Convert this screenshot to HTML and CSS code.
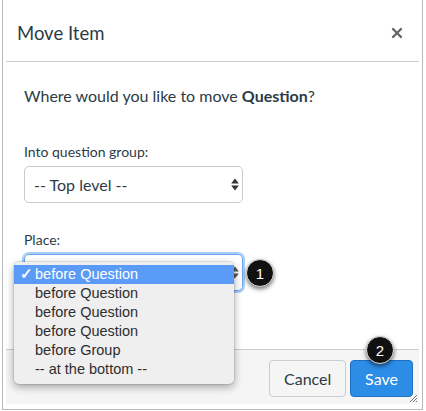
FILE: index.html
```html
<!DOCTYPE html>
<html>
<head>
<meta charset="utf-8">
<link rel="stylesheet" href="styles.css">
</head>
<body>
<div class="frame">
  <div class="dialog">
    <div class="header">
      <span class="title">Move Item</span>
      <svg class="close" width="12" height="12" viewBox="0 0 12 12"><path d="M2 2L10 10M10 2L2 10" stroke="#666" stroke-width="2.4" stroke-linecap="round"/></svg>
    </div>
    <div class="content">
      <p class="question">Where would you like to move <b>Question</b>?</p>
      <div class="label">Into question group:</div>
      <div class="select">
        <span>-- Top level --</span>
        <svg class="arrows" width="8" height="13" viewBox="0 0 8 13"><path d="M4 0.5L7.8 5.5H0.2Z M4 12.5L7.8 7.5H0.2Z" fill="#333"/></svg>
      </div>
      <div class="label label2">Place:</div>
      <div class="select focused">
        <span></span>
        <svg class="arrows" width="8" height="13" viewBox="0 0 8 13"><path d="M4 0.5L7.8 5.5H0.2Z M4 12.5L7.8 7.5H0.2Z" fill="#555"/></svg>
        <div class="badge badge1">1</div>
      </div>
    </div>
    <div class="footer">
      <button class="btn cancel">Cancel</button>
      <button class="btn save">Save<span class="badge badge2">2</span></button>
      <svg class="grip" width="9" height="9" viewBox="0 0 9 9"><path d="M8 1L1 8M8 4L4 8M8 7L7 8" stroke="#777" stroke-width="1"/></svg>
    </div>
  </div>
  <ul class="menu">
    <li class="sel"><span class="check">✓</span>before Question</li>
    <li>before Question</li>
    <li>before Question</li>
    <li>before Question</li>
    <li>before Group</li>
    <li>-- at the bottom --</li>
  </ul>
</div>
</body>
</html>
```
FILE: styles.css
```css
html, body { margin: 0; padding: 0; background: #fff; }
body { width: 426px; height: 411px; overflow: hidden; font-family: Lato, "Noto Sans", sans-serif; color: #2d3b45; }
.frame {
  position: relative;
  margin-left: 2px;
  width: 421px;
  height: 410px;
  box-sizing: border-box;
  border: 1px solid #b8b8b8;
  border-top: none;
  padding: 0 3px 5px 3px;
}
.dialog { display: flex; flex-direction: column; height: 100%; background: #fff; }
.header {
  height: 62px;
  border-bottom: 1px solid #c7cdd1;
  display: flex;
  align-items: center;
  justify-content: space-between;
  padding: 0 16px 0 11px;
  box-sizing: border-box;
  flex: none;
}
.title { font-size: 18.5px; margin-top: 4px; }
.close { margin-top: 5px; }
.content { flex: 1; padding: 22px 0 0 18px; }
.question { margin: 0; font-size: 16px; line-height: 24px; }
.question b { font-weight: 700; }
.label { margin-top: 34px; font-size: 14px; line-height: 20px; }
.label2 { margin-top: 27px; }
.select {
  position: relative;
  margin-top: 4px;
  width: 219px;
  height: 37px;
  box-sizing: border-box;
  border: 1px solid #c7cdd1;
  border-radius: 5px;
  display: flex;
  align-items: center;
  justify-content: space-between;
  padding: 0 3px 0 9px;
  font-size: 16px;
}
.select.focused {
  border-color: #6aa6ef;
  box-shadow: 0 0 0 2px #a9cdf6;
}
.badge {
  position: absolute;
  width: 28px;
  height: 28px;
  border-radius: 50%;
  background: #111;
  color: #fff;
  font-family: "Liberation Sans", Arial, sans-serif;
  font-size: 15px;
  line-height: 27px;
  text-align: center;
  box-shadow: 0 2px 4px rgba(0,0,0,0.55);
  border: 1px solid #ddd;
  box-sizing: border-box;
}
.badge1 { left: 221px; top: 4px; }
.badge2 { left: 15px; top: -25px; }
.footer {
  position: relative;
  height: 55px;
  box-sizing: border-box;
  border-top: 1px solid #c7cdd1;
  background: #f5f5f5;
  display: flex;
  justify-content: flex-end;
  align-items: flex-start;
  gap: 4px;
  padding: 10px 6px 0 0;
  flex: none;
}
.btn {
  position: relative;
  height: 37px;
  box-sizing: border-box;
  border-radius: 4px;
  font-family: Lato, "Noto Sans", sans-serif;
  font-size: 16px;
  padding: 0 14px;
}
.cancel { width: 77px; background: #f5f5f5; border: 1px solid #c7cdd1; color: #2d3b45; }
.save { width: 63px; background: #2b8de6; border: 1px solid #1f70bf; color: #fff; }
.grip { position: absolute; right: 1px; bottom: 1px; }
.menu {
  position: absolute;
  left: 11px;
  top: 262px;
  width: 220px;
  height: 122px;
  box-sizing: border-box;
  margin: 0;
  padding: 3px 0 0 0;
  list-style: none;
  background: #efefef;
  border-radius: 5px;
  box-shadow: 0 3px 9px rgba(0,0,0,0.35), 0 0 0 1px rgba(0,0,0,0.08);
  font-family: "Liberation Sans", Arial, sans-serif;
  font-size: 14.5px;
  color: #2e2e2e;
}
.menu li { position: relative; height: 19px; line-height: 19px; padding-left: 21px; }
.menu li.sel { background: #5a9bf7; color: #fff; }
.check { position: absolute; left: 6px; top: 0; font-weight: bold; }
```
